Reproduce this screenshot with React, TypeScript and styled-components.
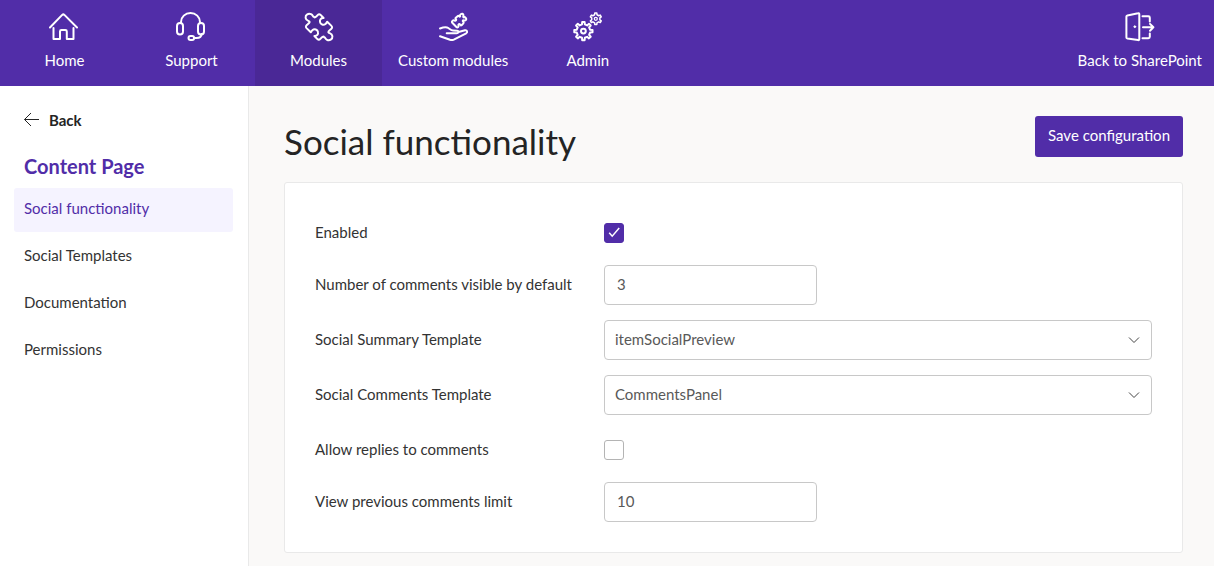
import React from "react";
import styled, { createGlobalStyle, css } from "styled-components";

const purple = "#512da8";
const ink = "#242424";
const softInk = "#333";

const GlobalStyle = createGlobalStyle`
  *, *::before, *::after { box-sizing: border-box; }
  body {
    margin: 0;
    background: #faf9f8;
    color: ${ink};
    font: 400 15px/20px Lato, Carlito, sans-serif;
  }
  button, input, select { font: inherit; }
`;

const Page = styled.div`
  display: flex;
  flex-direction: column;
  min-height: 100vh;
`;

const TopBar = styled.nav`
  display: flex;
  justify-content: space-between;
  height: 86px;
  background: ${purple};
`;

const NavGroup = styled.div`
  display: flex;
  padding-left: 1px;
`;

const NavItem = styled.a<{ $active?: boolean; $end?: boolean }>`
  display: flex;
  flex-direction: column;
  align-items: center;
  gap: 7px;
  min-width: 127px;
  padding: 11px ${(p) => (p.$end ? 12 : 16)}px 0;
  color: #fff;
  text-decoration: none;
  background: ${(p) => (p.$active ? "#4a2896" : "transparent")};
`;

const NavIcon = styled.svg`
  width: 32px;
  height: 32px;
  fill: none;
  stroke: currentColor;
  stroke-width: 2;
  stroke-linecap: round;
  stroke-linejoin: round;
`;

const Body = styled.div`
  display: flex;
  flex: 1;
`;

const Sidebar = styled.aside`
  flex: 0 0 249px;
  padding: 24px 15px 0 14px;
  background: #fff;
  border-right: 1px solid #e9e9e9;
`;

const BackLink = styled.a`
  display: flex;
  align-items: center;
  gap: 9px;
  padding-left: 9px;
  color: ${ink};
  font-weight: 700;
  text-decoration: none;
`;

const BackArrow = styled.svg`
  width: 17px;
  height: 16px;
  fill: none;
  stroke: currentColor;
`;

const SideTitle = styled.h2`
  margin: 24px 0 10px;
  padding-left: 10px;
  color: ${purple};
  font-size: 20px;
  font-weight: 700;
  line-height: 24px;
`;

const SideList = styled.ul`
  display: flex;
  flex-direction: column;
  gap: 3px;
  margin: 0;
  padding: 0;
  list-style: none;
`;

const SideLink = styled.a<{ $active?: boolean }>`
  display: block;
  padding: 10px 10px 14px;
  border-radius: 3px;
  color: ${(p) => (p.$active ? purple : softInk)};
  background: ${(p) => (p.$active ? "#f5f3ff" : "transparent")};
  text-decoration: none;
`;

const Main = styled.main`
  flex: 1;
  min-width: 0;
  padding: 30px 31px 13px 35px;
`;

const Heading = styled.header`
  display: flex;
  justify-content: space-between;
  align-items: flex-start;
  margin-bottom: 20px;
`;

const Title = styled.h1`
  margin: 0;
  padding-top: 4px;
  font-size: 35px;
  font-weight: 400;
  line-height: 42px;
`;

const SaveButton = styled.button`
  height: 41px;
  padding: 0 13px 3px;
  border: 0;
  border-radius: 3px;
  background: ${purple};
  color: #fff;
`;

const Card = styled.form`
  display: flex;
  flex-direction: column;
  gap: 15px;
  padding: 30px;
  background: #fff;
  border: 1px solid #e9e9e9;
  border-radius: 3px;
`;

const Row = styled.div`
  display: grid;
  grid-template-columns: 289px 1fr;
  align-items: center;
`;

const CheckRow = styled(Row)`
  padding: 10px 0 7px;
`;

const FieldLabel = styled.label`
  padding-bottom: 2px;
  color: ${softInk};
  line-height: 18px;
`;

const field = css`
  height: 40px;
  border: 1px solid #c8c8c8;
  border-radius: 4px;
  background: #fff;
  color: #595959;
`;

const TextField = styled.input`
  ${field}
  width: 213px;
  padding: 0 12px 3px;
`;

const SelectWrap = styled.div`
  display: grid;
  align-items: center;

  > * { grid-area: 1 / 1; }
`;

const SelectField = styled.select`
  ${field}
  appearance: none;
  width: 100%;
  padding: 0 32px 3px 10px;
`;

const Chevron = styled.svg`
  justify-self: end;
  width: 12px;
  height: 8px;
  margin-right: 12px;
  fill: none;
  stroke: #444;
  pointer-events: none;
`;

const CheckWrap = styled.div`
  display: grid;
  width: 20px;
  height: 20px;

  > * { grid-area: 1 / 1; }
`;

const CheckBox = styled.input`
  appearance: none;
  width: 20px;
  height: 20px;
  margin: 0;
  border: 1px solid #b4b4b4;
  border-radius: 3px;
  background: #fff;

  &:checked {
    border-color: ${purple};
    background: ${purple};
  }

  & + svg { visibility: hidden; }
  &:checked + svg { visibility: visible; }
`;

const Tick = styled.svg`
  width: 20px;
  height: 20px;
  fill: none;
  stroke: #fff;
  stroke-width: 1.5;
  pointer-events: none;
`;

function gear(cx: number, cy: number, outer: number, inner: number, teeth: number) {
  const step = (Math.PI * 2) / teeth;
  const points: string[] = [];
  for (let i = 0; i < teeth; i++) {
    const mid = i * step - Math.PI / 2;
    const corners: [number, number][] = [
      [-0.27, inner],
      [-0.17, outer],
      [0.17, outer],
      [0.27, inner],
    ];
    corners.forEach(([turn, r]) => {
      const a = mid + turn * step;
      points.push(`${(cx + r * Math.cos(a)).toFixed(2)} ${(cy + r * Math.sin(a)).toFixed(2)}`);
    });
  }
  return `M${points.join("L")}Z`;
}

const puzzle =
  "M14.8 10.8C15.6 12.2 17 11 18.4 9.3Q20 7.4 21.6 8.9L24.6 12C21.8 11.8 20.6 13.8 21 15.8C21.4 18.6 24.6 19.6 26.4 18C27.6 17 28 16 28.2 15.8L32.2 19.6Q34 21.4 32.2 23C30.6 24.4 28.6 25.6 29.6 26.6C30.4 27.4 33 27.2 33.4 30.2C33.8 33.4 30.4 35 28 33.8C26 32.8 26.2 31 25.2 31.2C24.4 29.8 23 31 21.6 32.7Q20 34.6 18.4 33.1L15.4 30C18.2 30.2 19.4 28.2 19 26.2C18.6 23.4 15.4 22.4 13.6 24C12.4 25 12 26 11.8 26.2L7.8 22.4Q6 20.6 7.8 19C9.4 17.6 11.4 16.4 10.4 15.4C9.6 14.6 7 14.8 6.6 11.8C6.2 8.6 9.6 7 12 8.2C14 9.2 13.8 10.6 14.8 10.8Z";

const HomeIcon = () => (
  <NavIcon viewBox="2 0 32 32" aria-hidden="true">
    <path d="M3 16.5 15.2 3.9Q16.3 2.9 17.4 3.9L30 16.5M6.5 17V28H13V20.4Q13 19 14.4 19H18.4Q19.8 19 19.8 20.4V28H26.5V17" />
  </NavIcon>
);

const SupportIcon = () => (
  <NavIcon viewBox="2 0 32 32" aria-hidden="true">
    <path d="M7 12V11A9.5 9 0 0 1 26 11V12M27.5 23C27.5 25.5 26 27 22.5 27H20" />
    <rect x="3" y="12" width="6" height="11.4" rx="3" />
    <rect x="24" y="12" width="6" height="11.4" rx="3" />
    <rect x="14.5" y="25" width="5.6" height="4" rx="2" />
  </NavIcon>
);

const ModulesIcon = () => (
  <NavIcon viewBox="4 5 32 32" aria-hidden="true">
    <path d={puzzle} />
  </NavIcon>
);

const CustomIcon = () => (
  <NavIcon viewBox="3 5 32 32" aria-hidden="true">
    <path d="M6 22.5C9 21.3 12.5 20.8 14.3 22C16.4 23.4 17.2 24.4 19 24.5L23 24.7C25 25 24.6 27.3 22.6 27.3H12.7M24.5 26L31 24.3C33.3 24 33.8 26.2 32.2 27.3L19.8 33.6Q18 34.4 16 33.8L6 30.3" />
    <path d="M22.4 21 18.3 16.8Q17.4 15.6 18.6 14.8C20.2 13.4 21 15.6 22 14.4C23 13 20.6 13 21.8 11.8L23.6 10.2C25 9 25.2 11.4 26.2 10.4C25 8.4 28.4 6.6 29.4 8.8C29.8 10.4 28.4 10.8 29.6 11.4C31.6 10.4 33.4 13.4 31.4 14.4C29.6 15 29.4 13.8 28.8 14.6C28.2 15.6 30.6 16 29.4 17.4L27.6 19.2C26.2 20.2 26.4 17.4 24.8 18.2C23.4 19.2 25.6 20 24 21.2Q23.2 21.8 22.4 21Z" />
  </NavIcon>
);

const AdminIcon = () => (
  <NavIcon viewBox="4 5 32 32" aria-hidden="true">
    <path d={gear(15.4, 25.1, 9.2, 6.8, 8)} />
    <circle cx="15.4" cy="25.1" r="2.4" />
    <path d={gear(27.8, 12.8, 5.8, 4.2, 6)} strokeWidth="1.5" />
    <circle cx="27.8" cy="12.8" r="1.5" strokeWidth="1.3" />
  </NavIcon>
);

const ExitIcon = () => (
  <NavIcon viewBox="0 0 32 32" aria-hidden="true">
    <path d="M2.4 5.6Q2.4 4.7 3.4 4.5L14 2.3Q15.3 2 15.3 3.3V28Q15.3 29.3 14 29.1L3.4 27.6Q2.4 27.4 2.4 26.6ZM18.5 5.3H24.4Q25.8 5.3 25.8 6.7V10.5M18.5 27.2H24.4Q25.8 27.2 25.8 25.8V22.4M19 16.3H29.4M26 12.9 29.4 16.3 26 19.7" />
    <circle cx="10.8" cy="15.7" r="0.9" fill="currentColor" strokeWidth="1" />
  </NavIcon>
);

const navItems = [
  { label: "Home", Icon: HomeIcon },
  { label: "Support", Icon: SupportIcon },
  { label: "Modules", Icon: ModulesIcon, active: true },
  { label: "Custom modules", Icon: CustomIcon },
  { label: "Admin", Icon: AdminIcon },
];

const sideItems = ["Social functionality", "Social Templates", "Documentation", "Permissions"];

function CheckField({ id, label, checked }: { id: string; label: string; checked?: boolean }) {
  return (
    <CheckRow>
      <FieldLabel htmlFor={id}>{label}</FieldLabel>
      <CheckWrap>
        <CheckBox id={id} type="checkbox" defaultChecked={checked} />
        <Tick viewBox="0 0 20 20" aria-hidden="true">
          <path d="M5.2 9.8 8.2 13.2 15.2 5" />
        </Tick>
      </CheckWrap>
    </CheckRow>
  );
}

function NumberField({ id, label, value }: { id: string; label: string; value: string }) {
  return (
    <Row>
      <FieldLabel htmlFor={id}>{label}</FieldLabel>
      <TextField id={id} type="text" inputMode="numeric" defaultValue={value} />
    </Row>
  );
}

function TemplateField({ id, label, value }: { id: string; label: string; value: string }) {
  return (
    <Row>
      <FieldLabel htmlFor={id}>{label}</FieldLabel>
      <SelectWrap>
        <SelectField id={id} defaultValue={value}>
          <option>{value}</option>
        </SelectField>
        <Chevron viewBox="0 0 12 8" aria-hidden="true">
          <path d="M1 1.5 6 6.5 11 1.5" />
        </Chevron>
      </SelectWrap>
    </Row>
  );
}

export default function App() {
  return (
    <Page>
      <GlobalStyle />
      <TopBar>
        <NavGroup>
          {navItems.map(({ label, Icon, active }) => (
            <NavItem key={label} href="#" $active={active}>
              <Icon />
              {label}
            </NavItem>
          ))}
        </NavGroup>
        <NavItem href="#" $end>
          <ExitIcon />
          Back to SharePoint
        </NavItem>
      </TopBar>
      <Body>
        <Sidebar>
          <BackLink href="#">
            <BackArrow viewBox="0 0 17 16" aria-hidden="true">
              <path d="M16 7.5H1.5M8 1 1.5 7.5 8 14" />
            </BackArrow>
            Back
          </BackLink>
          <SideTitle>Content Page</SideTitle>
          <SideList>
            {sideItems.map((item, i) => (
              <li key={item}>
                <SideLink href="#" $active={i === 0}>
                  {item}
                </SideLink>
              </li>
            ))}
          </SideList>
        </Sidebar>
        <Main>
          <Heading>
            <Title>Social functionality</Title>
            <SaveButton type="submit" form="social-settings">
              Save configuration
            </SaveButton>
          </Heading>
          <Card id="social-settings">
            <CheckField id="enabled" label="Enabled" checked />
            <NumberField id="visible" label="Number of comments visible by default" value="3" />
            <TemplateField id="summary" label="Social Summary Template" value="itemSocialPreview" />
            <TemplateField id="comments" label="Social Comments Template" value="CommentsPanel" />
            <CheckField id="replies" label="Allow replies to comments" />
            <NumberField id="limit" label="View previous comments limit" value="10" />
          </Card>
        </Main>
      </Body>
    </Page>
  );
}
